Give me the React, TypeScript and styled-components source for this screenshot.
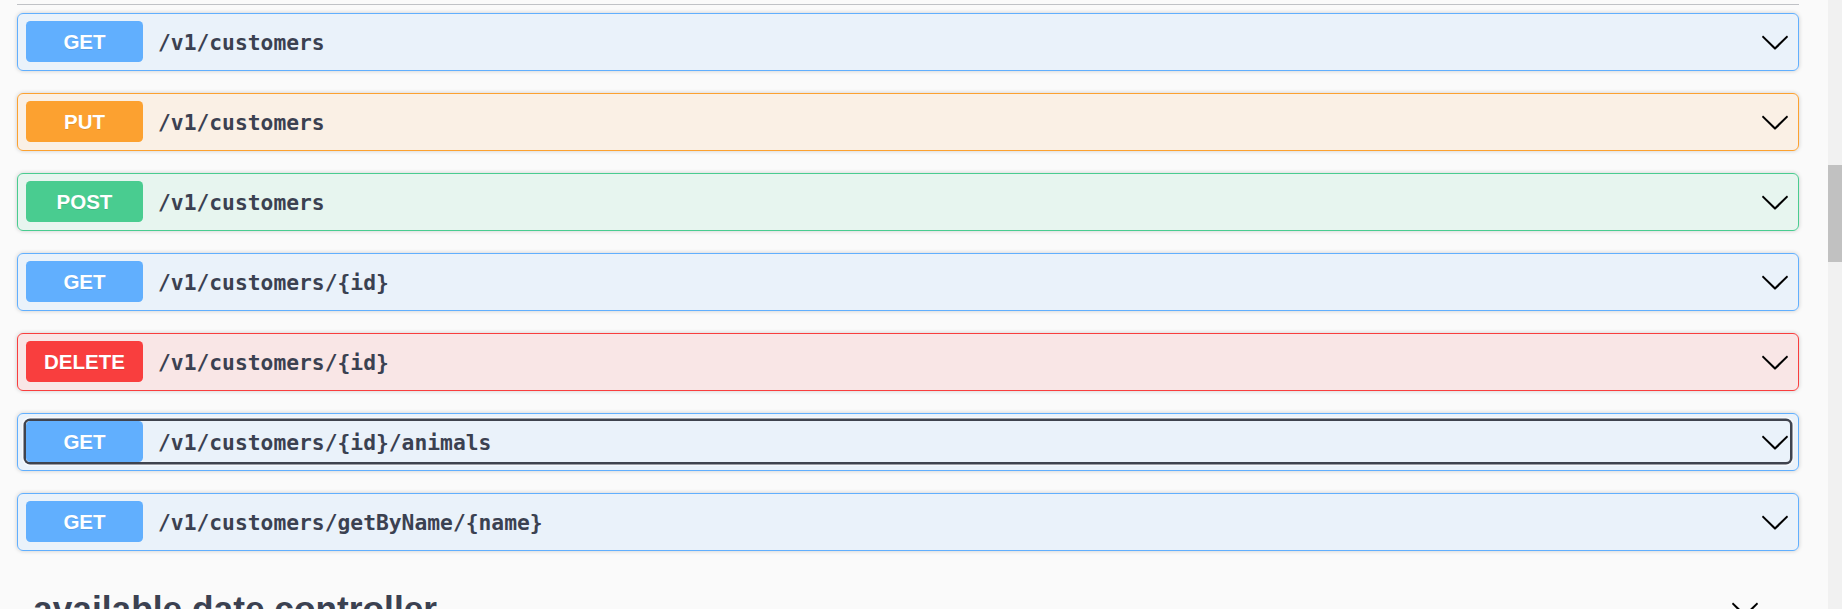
import React from "react";
import styled, { createGlobalStyle, css } from "styled-components";

const Global = createGlobalStyle`
  html, body {
    margin: 0;
    padding: 0;
    height: 609px;
    overflow: hidden;
    background: #fafafa;
  }
  #root { height: 609px; }
`;

type Method = "GET" | "PUT" | "POST" | "DELETE";

const COLORS: Record<Method, { main: string; bg: string }> = {
  GET: { main: "#61affe", bg: "rgba(97,175,254,.1)" },
  PUT: { main: "#fca130", bg: "rgba(252,161,48,.1)" },
  POST: { main: "#49cc90", bg: "rgba(73,204,144,.1)" },
  DELETE: { main: "#f93e3e", bg: "rgba(249,62,62,.1)" },
};

const Shell = styled.div`
  display: flex;
  height: 609px;
  overflow: hidden;
  background: #fafafa;
`;

const Main = styled.main`
  flex: 1;
  min-width: 0;
  padding: 4px 29px 0 17px;
  overflow: hidden;
`;

const TagDivider = styled.div`
  height: 1px;
  background: rgba(59, 65, 81, 0.3);
`;

const OpList = styled.div`
  display: flex;
  flex-direction: column;
  padding-top: 8px;
`;

const OpBlock = styled.div<{ $m: Method }>`
  border: 1px solid ${(p) => COLORS[p.$m].main};
  background: ${(p) => COLORS[p.$m].bg};
  border-radius: 6px;
  box-shadow: 0 0 4.5px rgba(0, 0, 0, 0.19);
  margin-bottom: 22px;
`;

const Summary = styled.div`
  display: flex;
  align-items: center;
  padding: 7px 8px 8px 8px;
`;

const Control = styled.div<{ $focused?: boolean }>`
  flex: 1;
  display: flex;
  align-items: center;
  border-radius: 4px;
  ${(p) =>
    p.$focused &&
    css`
      box-shadow: 0 0 0 2.5px #3f434e, 0 0 0 4px #f6f9fd;
    `}
`;

const MethodBadge = styled.span<{ $m: Method }>`
  flex: none;
  width: 117px;
  height: 41px;
  line-height: 41px;
  text-align: center;
  border-radius: 4.5px;
  background: ${(p) => COLORS[p.$m].main};
  color: #fff;
  font-family: "Liberation Sans", Arial, sans-serif;
  font-weight: 700;
  font-size: 20.5px;
  text-shadow: 0 1px 0 rgba(0, 0, 0, 0.1);
`;

const Path = styled.span`
  flex: 1;
  padding: 2px 15px 0;
  font-family: "DejaVu Sans Mono", "Liberation Mono", monospace;
  font-weight: 700;
  font-size: 21.3px;
  color: #3b4151;
  white-space: nowrap;
`;

const ArrowSvg = styled.svg`
  flex: none;
  width: 30px;
  height: 30px;
  fill: #000;
`;

const TagRow = styled.div`
  display: flex;
  align-items: center;
  justify-content: space-between;
  margin-top: 16px;
  padding: 0 39px 0 16px;
  height: 40px;
`;

const TagTitle = styled.h3`
  margin: 0;
  font-family: "Liberation Sans", Arial, sans-serif;
  font-weight: 700;
  font-size: 35.3px;
  line-height: 40px;
  color: #3b4151;
`;

const ScrollTrack = styled.div`
  flex: none;
  width: 14px;
  background: #f1f1f1;
  display: flex;
  flex-direction: column;
`;

const ScrollThumb = styled.div`
  margin-top: 165px;
  height: 97px;
  background: #c1c1c1;
`;

const Arrow = () => (
  <ArrowSvg viewBox="0 0 20 20" aria-hidden="true">
    <path d="M17.418 6.109c.272-.268.709-.268.979 0s.271.701 0 .969l-7.908 7.83c-.27.268-.707.268-.979 0l-7.908-7.83c-.27-.268-.27-.701 0-.969.271-.268.709-.268.979 0L10 13.25l7.418-7.141z" />
  </ArrowSvg>
);

const ops: { m: Method; path: string; focused?: boolean }[] = [
  { m: "GET", path: "/v1/customers" },
  { m: "PUT", path: "/v1/customers" },
  { m: "POST", path: "/v1/customers" },
  { m: "GET", path: "/v1/customers/{id}" },
  { m: "DELETE", path: "/v1/customers/{id}" },
  { m: "GET", path: "/v1/customers/{id}/animals", focused: true },
  { m: "GET", path: "/v1/customers/getByName/{name}" },
];

export default function App() {
  return (
    <Shell>
      <Global />
      <Main>
        <TagDivider />
        <OpList>
          {ops.map((op, i) => (
            <OpBlock key={i} $m={op.m}>
              <Summary>
                <Control $focused={op.focused}>
                  <MethodBadge $m={op.m}>{op.m}</MethodBadge>
                  <Path>{op.path}</Path>
                  <Arrow />
                </Control>
              </Summary>
            </OpBlock>
          ))}
        </OpList>
        <TagRow>
          <TagTitle>available date controller</TagTitle>
          <Arrow />
        </TagRow>
      </Main>
      <ScrollTrack>
        <ScrollThumb />
      </ScrollTrack>
    </Shell>
  );
}
